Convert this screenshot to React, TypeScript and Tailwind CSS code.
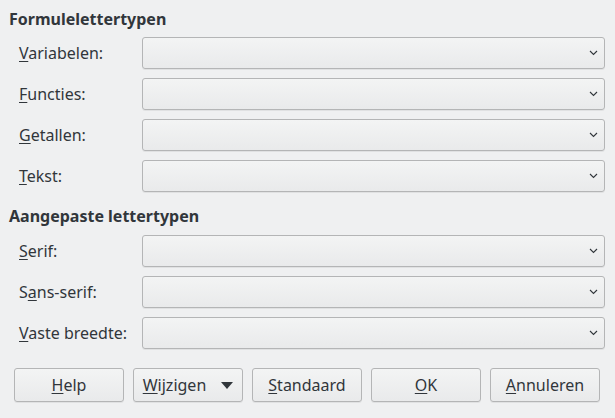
import React from "react";

const Chevron = () => (
  <svg width="9" height="6" viewBox="0 0 9 6" className="shrink-0">
    <path d="M1 1 L4.5 4.5 L8 1" fill="none" stroke="#31363b" strokeWidth="1.1" />
  </svg>
);

const Label = ({ text, u }: { text: string; u: number }) => (
  <span>
    {text.slice(0, u)}
    <span className="underline underline-offset-2">{text[u]}</span>
    {text.slice(u + 1)}
  </span>
);

const Row = ({ text, u }: { text: string; u: number }) => (
  <div className="flex items-center h-8">
    <div className="w-[123px] shrink-0">
      <Label text={text} u={u} />
    </div>
    <div className="flex-1 h-8 rounded-[3px] border border-[#b4b5b6] bg-gradient-to-b from-[#f3f4f4] to-[#e9eaeb] shadow-[0_1px_0_rgba(0,0,0,0.06)] flex items-center justify-end pr-[6px]">
      <Chevron />
    </div>
  </div>
);

const Btn = ({ text, u, menu }: { text: string; u: number; menu?: boolean }) => (
  <button className="w-[110px] h-[34px] rounded-[3px] border border-[#b4b5b6] bg-gradient-to-b from-[#f3f4f4] to-[#e9eaeb] shadow-[0_1px_0_rgba(0,0,0,0.06)] flex items-center justify-center gap-[15px]">
    <Label text={text} u={u} />
    {menu && (
      <svg width="12" height="7" viewBox="0 0 12 7">
        <path d="M0 0 H12 L6 7 Z" fill="#31363b" />
      </svg>
    )}
  </button>
);

export default function App() {
  return (
    <div
      className="w-[615px] h-[418px] bg-[#eff0f1] text-[#31363b] text-[16px] leading-5"
      style={{ fontFamily: '"Noto Sans", sans-serif' }}
    >
      <div className="pl-[9px] pr-[10px] pt-[9px]">
        <div className="font-bold h-5">Formulelettertypen</div>
        <div className="flex flex-col gap-[9px] pl-[10px] mt-2">
          <Row text="Variabelen:" u={0} />
          <Row text="Functies:" u={0} />
          <Row text="Getallen:" u={0} />
          <Row text="Tekst:" u={0} />
        </div>
        <div className="font-bold h-5 mt-[14px]">Aangepaste lettertypen</div>
        <div className="flex flex-col gap-[9px] pl-[10px] mt-[9px]">
          <Row text="Serif:" u={0} />
          <Row text="Sans-serif:" u={1} />
          <Row text="Vaste breedte:" u={0} />
        </div>
      </div>
      <div className="flex gap-[9px] pl-[14px] mt-[19px]">
        <Btn text="Help" u={0} />
        <Btn text="Wijzigen" u={0} menu />
        <Btn text="Standaard" u={0} />
        <Btn text="OK" u={0} />
        <Btn text="Annuleren" u={0} />
      </div>
    </div>
  );
}
